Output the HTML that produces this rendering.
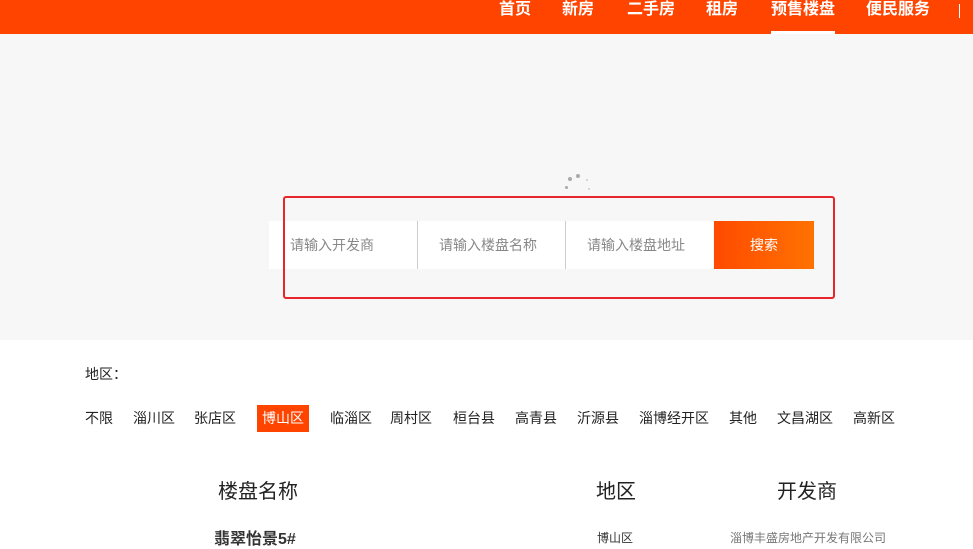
<!DOCTYPE html>
<html><head><meta charset="utf-8"><style>
*{margin:0;padding:0;box-sizing:border-box}
body{width:973px;height:543px;overflow:hidden;background:#fff;font-family:"Liberation Sans","Noto Sans CJK SC",sans-serif;position:relative}
.a{position:absolute;white-space:nowrap}
.hd{left:0;top:0;width:973px;height:34px;background:#ff4400}
.nav{top:0;height:34px;line-height:20px;color:#fff;font-size:16px;font-weight:bold}
.gray{left:0;top:34px;width:973px;height:306px;background:#f7f7f7}
.inp{top:221px;height:48px;background:#fff;color:#888;font-size:14px;line-height:48px;padding-left:21px}
.f{top:405px;height:27px;line-height:27px;font-size:14px;color:#222}
.dot{width:4px;height:4px;border-radius:2px;background:#aaa}
</style></head><body>
<div class="a hd"></div>
<div class="a nav" style="left:499px">首页</div>
<div class="a nav" style="left:562px">新房</div>
<div class="a nav" style="left:627px">二手房</div>
<div class="a nav" style="left:706px">租房</div>
<div class="a nav" style="left:771px">预售楼盘</div>
<div class="a nav" style="left:866px">便民服务</div>
<div class="a" style="left:771px;top:31px;width:64px;height:3px;background:#fff"></div>
<div class="a" style="left:959px;top:4px;width:1px;height:14px;background:#fff"></div>
<div class="a gray"></div>
<div class="a dot" style="left:568px;top:177px"></div>
<div class="a dot" style="left:576px;top:174px"></div>
<div class="a dot" style="left:565px;top:186px;width:3px;height:3px"></div>
<div class="a dot" style="left:586px;top:179px;width:2px;height:2px;background:#ccc"></div>
<div class="a dot" style="left:588px;top:188px;width:2px;height:2px;background:#ccc"></div>
<div class="a inp" style="left:269px;width:148px">请输入开发商</div>
<div class="a inp" style="left:418px;width:147px">请输入楼盘名称</div>
<div class="a inp" style="left:566px;width:147px">请输入楼盘地址</div>
<div class="a" style="left:417px;top:221px;width:1px;height:48px;background:#ccc"></div>
<div class="a" style="left:565px;top:221px;width:1px;height:48px;background:#ccc"></div>
<div class="a" style="left:714px;top:221px;width:100px;height:48px;background:linear-gradient(90deg,#ff4a00,#ff7200);color:#fff;font-size:14px;line-height:48px;text-align:center">搜索</div>
<div class="a" style="left:283px;top:196px;width:552px;height:103px;border:2px solid #e8262a;border-radius:3px"></div>
<div class="a" style="left:85px;top:364px;font-size:14px;color:#222">地区：</div>
<div class="a f" style="left:85px">不限</div>
<div class="a f" style="left:133px">淄川区</div>
<div class="a f" style="left:194px">张店区</div>
<div class="a f" style="left:257px;width:52px;background:#ff4400;color:#fff;text-align:center">博山区</div>
<div class="a f" style="left:330px">临淄区</div>
<div class="a f" style="left:390px">周村区</div>
<div class="a f" style="left:453px">桓台县</div>
<div class="a f" style="left:515px">高青县</div>
<div class="a f" style="left:577px">沂源县</div>
<div class="a f" style="left:639px">淄博经开区</div>
<div class="a f" style="left:729px">其他</div>
<div class="a f" style="left:777px">文昌湖区</div>
<div class="a f" style="left:853px">高新区</div>
<div class="a" style="left:218px;top:475px;font-size:20px;color:#222">楼盘名称</div>
<div class="a" style="left:596px;top:475px;font-size:20px;color:#222">地区</div>
<div class="a" style="left:777px;top:475px;font-size:20px;color:#222">开发商</div>
<div class="a" style="left:214px;top:525px;font-size:16px;font-weight:bold;color:#333">翡翠怡景5#</div>
<div class="a" style="left:597px;top:529px;font-size:12px;color:#333">博山区</div>
<div class="a" style="left:730px;top:529px;font-size:12px;color:#777">淄博丰盛房地产开发有限公司</div>
</body></html>
